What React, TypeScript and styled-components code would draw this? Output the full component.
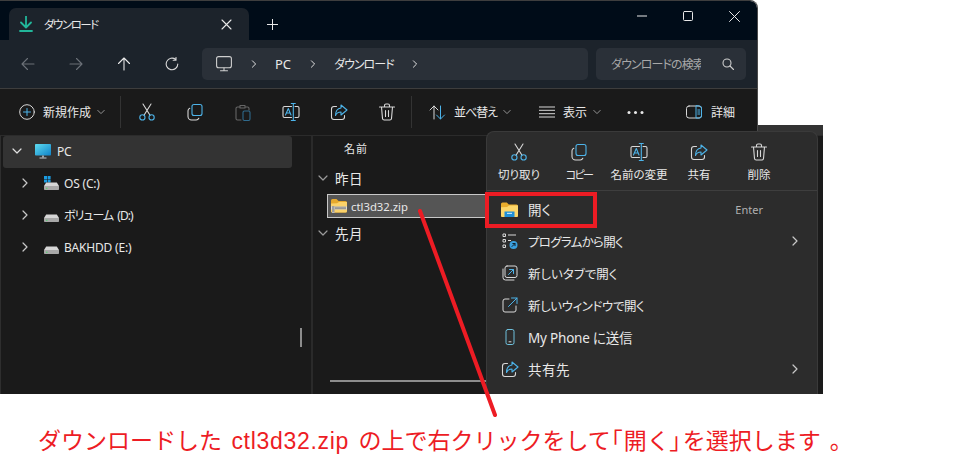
import React from "react";
import styled, { createGlobalStyle } from "styled-components";

const WHITE = "#e8e8e8";
const BLUE = "#4db4ea";
const UI = `"Noto Sans", "Noto Sans CJK JP", sans-serif`;

const Global = createGlobalStyle`
  html, body { margin: 0; padding: 0; background: #fff; }
  body { font-family: ${UI}; font-feature-settings: "palt"; }
  * { box-sizing: border-box; }
`;

const Page = styled.div`
  width: 957px;
  height: 467px;
  overflow: hidden;
  background: #fff;
`;
const Shot = styled.div`
  position: relative;
  width: 823px;
  height: 394px;
`;
const TopWindow = styled.div`
  width: 758px;
  display: flex;
  flex-direction: column;
  border-top-right-radius: 8px;
  overflow: hidden;
  border-right: 1px solid #4a4a4a;
  border-top: 1px solid #3e3e3e;
`;
const TitleBar = styled.div`
  height: 39px;
  background: #000c18;
  display: flex;
  align-items: flex-end;
  padding-left: 9px;
`;
const Tab = styled.div`
  width: 240px;
  height: 32px;
  background: #1c232b;
  border-radius: 7px 7px 0 0;
  display: flex;
  align-items: center;
  padding: 0 17px 0 9px;
  gap: 10px;
`;
const TabLabel = styled.span`
  flex: 1;
  font-size: 11.5px;
  letter-spacing: -1.5px;
  color: ${WHITE};
  white-space: nowrap;
`;
const NewTab = styled.div`
  width: 46px;
  height: 32px;
  display: flex;
  align-items: center;
  justify-content: center;
`;
const WinControls = styled.div`
  margin-left: auto;
  align-self: stretch;
  display: flex;
`;
const WinBtn = styled.div`
  width: 46px;
  display: flex;
  align-items: center;
  justify-content: center;
  padding-bottom: 9px;
`;
const NavBar = styled.div`
  height: 49px;
  background: #1c232b;
  border-bottom: 1px solid #3d3d3d;
  display: flex;
  align-items: center;
  padding: 0 0 1px 4px;
`;
const NavBtn = styled.div`
  width: 48px;
  display: flex;
  align-items: center;
  justify-content: center;
`;
const AddressBox = styled.div`
  margin-left: 6px;
  width: 386px;
  height: 32px;
  background: #2a3038;
  border-radius: 5px;
  display: flex;
  align-items: center;
  padding-left: 14px;
  gap: 17.5px;
`;
const Crumb = styled.span<{ $ls?: number; $size?: number }>`
  font-size: ${(p) => p.$size ?? 13}px;
  letter-spacing: ${(p) => p.$ls ?? 0}px;
  color: ${WHITE};
  white-space: nowrap;
`;
const SearchBox = styled.div`
  margin-left: 8px;
  width: 150px;
  height: 32px;
  background: #2a3038;
  border-radius: 5px;
  display: flex;
  align-items: center;
  padding: 0 12px 0 15px;
`;
const SearchText = styled.span`
  width: 90px;
  overflow: hidden;
  white-space: nowrap;
  font-size: 12px;
  letter-spacing: -0.9px;
  color: #a8a8a8;
  margin-right: auto;
`;
const Toolbar = styled.div`
  position: relative;
  height: 46px;
  background: #1a1a1a;
  display: flex;
  align-items: center;
`;
const ToolGroup = styled.div<{ $w: number; $pad: number; $gap?: number }>`
  width: ${(p) => p.$w}px;
  padding-left: ${(p) => p.$pad}px;
  display: flex;
  align-items: center;
  gap: ${(p) => p.$gap ?? 8}px;
  flex: none;
`;
const ToolLabel = styled.span<{ $ls?: number }>`
  font-size: 12px;
  letter-spacing: ${(p) => p.$ls ?? 0}px;
  color: ${WHITE};
  white-space: nowrap;
`;
const Caret = styled.span`
  margin-left: -2px;
  display: flex;
`;
const ToolDivider = styled.div`
  width: 1px;
  height: 32px;
  background: #333;
  flex: none;
  margin: 0 2px 0 0;
`;
const ToolIcon = styled.div`
  width: 48px;
  flex: none;
  display: flex;
  justify-content: center;
`;
const BackStrip = styled.div`
  position: absolute;
  left: 758px;
  top: 125px;
  width: 65px;
  height: 10px;
  background: #333;
`;
const Body = styled.div`
  width: 823px;
  height: 259px;
  background: #1a1a1a;
  border-left: 1px solid #2e2e2e;
  display: flex;
  border-top: 1px solid #2b2b2b;
`;
const NavPane = styled.div`
  width: 310px;
  flex: none;
  padding: 0 0 0 2px;
  display: flex;
  flex-direction: column;
`;
const TreeRow = styled.div<{ $active?: boolean; $level: number }>`
  width: 289px;
  height: 32px;
  border-radius: 3px;
  background: ${(p) => (p.$active ? "#333333" : "transparent")};
  display: flex;
  align-items: center;
  padding: 0 0 2px ${(p) => (p.$level ? 17 : 9)}px;
  gap: ${(p) => (p.$level ? 14 : 13)}px;
`;
const TreeLabel = styled.span<{ $level: number; $ls?: number; $ws?: number }>`
  font-size: 12px;
  letter-spacing: ${(p) => p.$ls ?? -0.2}px;
  word-spacing: ${(p) => p.$ws ?? 0}px;
  color: ${WHITE};
  white-space: nowrap;
  margin-left: ${(p) => (p.$level ? -9 : -7)}px;
`;
const VScroll = styled.div`
  position: absolute;
  left: 300px;
  top: 328px;
  width: 2px;
  height: 19px;
  background: #8c8c8c;
`;
const HScroll = styled.div`
  position: absolute;
  left: 330px;
  top: 380px;
  width: 156px;
  height: 2px;
  background: #8c8c8c;
`;
const FilePane = styled.div`
  flex: 1;
  border-left: 2px solid #2a2a2a;
  display: flex;
  flex-direction: column;
`;
const ColumnHead = styled.div`
  height: 26px;
  padding: 0 0 3px 31px;
  display: flex;
  align-items: center;
  font-size: 11px;
  letter-spacing: 1px;
  color: ${WHITE};
`;
const GroupRow = styled.div`
  height: 32px;
  padding-left: 5px;
  display: flex;
  align-items: center;
  gap: 7px;
  font-size: 13.5px;
  letter-spacing: 0.5px;
  color: ${WHITE};
`;
const FileRow = styled.div`
  margin: 0 0 -1px 14px;
  height: 24px;
  width: 180px;
  background: #555;
  border: 1px solid #c8c8c8;
  display: flex;
  align-items: center;
  padding-left: 3px;
  gap: 4px;
  font-size: 11.3px;
  color: ${WHITE};
`;
const Menu = styled.div`
  position: absolute;
  left: 486px;
  top: 131px;
  width: 332px;
  height: 263px;
  background: #2c2c2c;
  border: 1px solid #3a3a3a;
  border-bottom: 0;
  border-radius: 8px 8px 0 0;
`;
const QuickBar = styled.div`
  height: 59px;
  border-bottom: 1px solid #3e3e3e;
  padding: 10px 0 0 2px;
  display: grid;
  grid-template-columns: repeat(5, 60px);
`;
const QuickCell = styled.div`
  display: flex;
  flex-direction: column;
  align-items: center;
  gap: 4px;
`;
const QuickLabel = styled.span<{ $ls?: number; $size?: number }>`
  font-size: ${(p) => p.$size ?? 11.5}px;
  letter-spacing: ${(p) => p.$ls ?? 0}px;
  color: ${WHITE};
  white-space: nowrap;
`;
const MenuList = styled.div`
  padding-top: 2px;
  display: flex;
  flex-direction: column;
`;
const MenuRow = styled.div`
  height: 32px;
  display: flex;
  align-items: center;
  padding: 0 17px 0 12px;
`;
const MenuIcon = styled.div`
  width: 21px;
  margin-right: 8px;
  display: flex;
  justify-content: center;
`;
const MenuLabel = styled.span<{ $ls?: number; $size?: number }>`
  font-size: ${(p) => p.$size ?? 12.5}px;
  letter-spacing: ${(p) => p.$ls ?? 0}px;
  color: ${WHITE};
  white-space: nowrap;
  flex: 1;
`;
const MenuHint = styled.span`
  font-size: 11px;
  color: #b0b0b0;
  margin-right: 37px;
`;
const Annotation = styled.div`
  position: absolute;
  left: 485px;
  top: 192px;
  width: 112px;
  height: 36px;
  border: 4px solid #ed1c24;
`;
const Pointer = styled.svg`
  position: absolute;
  left: 0;
  top: 0;
  width: 957px;
  height: 467px;
  pointer-events: none;
`;
const Caption = styled.div`
  height: 73px;
  padding: 32px 0 0 38px;
  font-family: "Liberation Sans", "Noto Sans CJK JP", sans-serif;
  font-feature-settings: normal;
  font-size: 23px;
  line-height: 30px;
  color: #ed1c24;
  white-space: nowrap;
`;
const CaptionLatin = styled.span`
  letter-spacing: 0.7px;
  margin: 0 3px;
`;
const CaptionBracket = styled.span`
  font-feature-settings: "palt";
  letter-spacing: 1.5px;
`;
const CaptionStop = styled.span`
  margin-left: 9px;
`;

const Svg = styled.svg.attrs({ fill: "none", strokeLinecap: "round", strokeLinejoin: "round" })<{ $s?: number }>`
  width: ${(p) => p.$s ?? 20}px;
  height: ${(p) => p.$s ?? 20}px;
  display: block;
  flex: none;
`;

const Chevron = ({ dir, color = "#c8c8c8", s = 10 }: { dir: "r" | "d"; color?: string; s?: number }) => (
  <Svg $s={s} viewBox="0 0 10 10" stroke={color} strokeWidth={1.2}>
    <path d={dir === "r" ? "M3 1l4 4-4 4" : "M1 3l4 4 4-4"} />
  </Svg>
);
const Scissors = () => (
  <Svg viewBox="0 0 20 20" strokeWidth={1.1}>
    <path d="M7 13.2L14 2M13 13.2L6 2" stroke="#d8d8d8" />
    <circle cx="5.4" cy="15.4" r="2.6" stroke={BLUE} />
    <circle cx="14.6" cy="15.4" r="2.6" stroke={BLUE} />
  </Svg>
);
const Copy = () => (
  <Svg viewBox="0 0 20 20" strokeWidth={1.1}>
    <rect x="7" y="2.5" width="10" height="11" rx="2" stroke={BLUE} />
    <path d="M4.8 6.2C3.6 6.7 3 7.6 3 8.8v5.7C3 16.4 4.6 18 6.5 18h4.7c1.2 0 2.1-.6 2.6-1.8" stroke="#d8d8d8" />
  </Svg>
);
const Paste = () => (
  <Svg viewBox="0 0 20 20" strokeWidth={1.1}>
    <path d="M7 5H4.5C3.7 5 3 5.7 3 6.500v10C3 17.300 3.700 18 4.500 18H8M13 5h1.500c.8 0 1.500.7 1.500 1.500V8M7 3.500h5V6H7z" stroke="#666" />
    <rect x="10" y="9" width="7" height="9.500" rx="1.400" stroke="#2f6a8c" />
  </Svg>
);
const Rename = () => (
  <Svg viewBox="0 0 20 20" strokeWidth={1.1}>
    <path d="M10.500 4.500H3.500C2.700 4.500 2 5.200 2 6v8c0 .8.7 1.500 1.500 1.500h7M14 4.500h2.500c.8 0 1.500.7 1.500 1.500v8c0 .8-.7 1.500-1.500 1.500H14" stroke="#d8d8d8" />
    <path d="M10.300 1.500h4M10.300 18.500h4M12.300 1.500v17" stroke={BLUE} />
    <path d="M4.500 13L7.300 6.500 10 13M5.400 11h3.800" stroke={BLUE} />
  </Svg>
);
const Share = () => (
  <Svg viewBox="0 0 20 20" strokeWidth={1.1}>
    <path d="M7.500 4.500H5C3.600 4.500 2.500 5.600 2.500 7v8C2.500 16.400 3.600 17.500 5 17.500h8c1.400 0 2.500-1.100 2.500-2.500v-1.500" stroke="#d8d8d8" />
    <path d="M12 3l6 5-6 5v-3C9.500 10 7.500 11 6.500 13.500 6.500 9.500 8.500 6.500 12 6z" stroke={BLUE} />
  </Svg>
);
const Trash = () => (
  <Svg viewBox="0 0 20 20" strokeWidth={1.1} stroke="#d8d8d8">
    <path d="M2.500 5h15M7.500 5V3.500C7.500 2.700 8.200 2 9 2h2c.8 0 1.500.7 1.500 1.500V5M4.500 5l1 11.500c.1 1 .9 1.500 1.700 1.500h5.600c.8 0 1.600-.5 1.700-1.500l1-11.500M8.500 8.500v6M11.500 8.500v6" />
  </Svg>
);
const FolderBlue = () => (
  <svg width="17" height="15" viewBox="0 0 17 15">
    <path d="M0 2a1.500 1.500 0 0 1 1.500-1.500h4.300l2 2H15.500A1.500 1.500 0 0 1 17 4v9.500A1.500 1.500 0 0 1 15.500 15h-14A1.500 1.500 0 0 1 0 13.500z" fill="#e9ac2c" />
    <path d="M0 5.200l6-.2 2-1.500h9v10A1.500 1.500 0 0 1 15.500 15h-14A1.500 1.500 0 0 1 0 13.500z" fill="#fcd66a" />
    <path d="M3.500 9.500h10V15h-10z" fill="#1f8fd8" />
    <path d="M6 10.800h5v1.200H6z" fill="#bfe3f7" />
  </svg>
);
const ZipFolder = () => (
  <svg width="16" height="14" viewBox="0 0 16 14">
    <path d="M0 1.500A1.500 1.500 0 0 1 1.500 0h4l2 2h7A1.500 1.500 0 0 1 16 3.500V12a1.500 1.500 0 0 1-1.500 1.500h-13A1.500 1.500 0 0 1 0 12z" fill="#e6a92d" />
    <path d="M0 4.500l6-.2 2-1.300h8v9A1.500 1.500 0 0 1 14.500 13.500h-13A1.500 1.500 0 0 1 0 12z" fill="#fbd26a" />
    <path d="M0 7.500h16v3H0z" fill="#d8d8d8" />
    <path d="M1 7v7h2.500V7z" fill="#bdbdbd" />
    <path d="M1 8h2.500M1 10h2.500M1 12h2.500M4 8.200h11M4 9.700h11" stroke="#666" strokeWidth="0.7" />
  </svg>
);
const Monitor = () => (
  <svg width="16" height="15" viewBox="0 0 16 15">
    <defs>
      <linearGradient id="mon" x1="0" y1="0" x2="1" y2="1">
        <stop offset="0" stopColor="#5fdcf0" />
        <stop offset="1" stopColor="#0f82c8" />
      </linearGradient>
    </defs>
    <rect x="0" y="0" width="16" height="11.500" rx="0.800" fill="url(#mon)" />
    <path d="M7 11.500h2V13.500H7z" fill="#9aa3aa" />
    <path d="M4.500 13.500h7V14.500h-7z" fill="#c4cacf" />
  </svg>
);
const Drive = ({ win }: { win?: boolean }) => (
  <svg width="15" height="15" viewBox="0 0 15 15">
    {win && <path d="M0 0h3v3H0zM3.600 0h3v3h-3zM0 3.600h3v3H0zM3.600 3.600h3v3h-3z" fill="#1b9be0" />}
    <path d="M2.200 6.500h10.600L15 10H0z" fill="#d6d6d6" />
    <path d="M0 10h15v3.200a.8.8 0 0 1-.8.8H.8a.8.8 0 0 1-.8-.8z" fill="#a8a8a8" />
    <path d="M2 11.700h1.500v1H2z" fill="#4bd46a" />
  </svg>
);

export default function App() {
  return (
    <Page>
      <Global />
      <Shot>
        <TopWindow>
          <TitleBar>
            <Tab>
              <Svg $s={16} viewBox="0 0 16 16" stroke="#22b69a" strokeWidth={1.8} strokeLinecap="butt">
                <path d="M8 0v11M3 6.500l5 5 5-5M2 15h12" />
              </Svg>
              <TabLabel>ダウンロード</TabLabel>
              <Svg $s={11} viewBox="0 0 11 11" stroke="#e8e8e8" strokeWidth={1.1}>
                <path d="M1 1l9 9M10 1l-9 9" />
              </Svg>
            </Tab>
            <NewTab>
              <Svg $s={11} viewBox="0 0 11 11" stroke="#e8e8e8" strokeWidth={1}>
                <path d="M5.500 0v11M0 5.500h11" />
              </Svg>
            </NewTab>
            <WinControls>
              <WinBtn>
                <Svg $s={10} viewBox="0 0 10 10" stroke="#e8e8e8" strokeWidth={1} strokeLinecap="butt">
                  <path d="M0 5h10" />
                </Svg>
              </WinBtn>
              <WinBtn>
                <Svg $s={10} viewBox="0 0 10 10" stroke="#e8e8e8" strokeWidth={1}>
                  <rect x="0.500" y="0.500" width="9" height="9" rx="1" />
                </Svg>
              </WinBtn>
              <WinBtn>
                <Svg $s={11} viewBox="0 0 11 11" stroke="#e8e8e8" strokeWidth={1}>
                  <path d="M0.500 0.500l10 10M10.500 0.500l-10 10" />
                </Svg>
              </WinBtn>
            </WinControls>
          </TitleBar>
          <NavBar>
            <NavBtn>
              <Svg $s={14} viewBox="0 0 14 14" stroke="#6b7077" strokeWidth={1.1}>
                <path d="M13 7H1M6.500 1.500L1 7l5.500 5.500" />
              </Svg>
            </NavBtn>
            <NavBtn>
              <Svg $s={14} viewBox="0 0 14 14" stroke="#6b7077" strokeWidth={1.1}>
                <path d="M1 7h12M7.500 1.500L13 7l-5.500 5.500" />
              </Svg>
            </NavBtn>
            <NavBtn>
              <Svg $s={14} viewBox="0 0 14 14" stroke="#e8e8e8" strokeWidth={1.1}>
                <path d="M7 13V1M1.500 6.500L7 1l5.500 5.500" />
              </Svg>
            </NavBtn>
            <NavBtn>
              <Svg $s={14} viewBox="0 0 14 14" stroke="#d8d8d8" strokeWidth={1.1}>
                <path d="M12.800 7A5.800 5.800 0 1 1 10.700 2.500M11 .5v2.800H8.200" />
              </Svg>
            </NavBtn>
            <AddressBox>
              <Svg $s={16} viewBox="0 0 16 16" stroke="#cfcfcf" strokeWidth={1.1}>
                <rect x="0.600" y="0.600" width="14.800" height="11.200" rx="2" />
                <path d="M8 12v2.500M4.500 14.800h7" />
              </Svg>
              <Chevron dir="r" color="#e8e8e8" s={8} />
              <Crumb>PC</Crumb>
              <Chevron dir="r" color="#e8e8e8" s={8} />
              <Crumb $size={12} $ls={-1}>ダウンロード</Crumb>
              <Chevron dir="r" color="#e8e8e8" s={8} />
            </AddressBox>
            <SearchBox>
              <SearchText>ダウンロードの検索</SearchText>
              <Svg $s={12} viewBox="0 0 12 12" stroke="#cfcfcf" strokeWidth={1.1}>
                <circle cx="5" cy="5" r="4" />
                <path d="M8 8l3.500 3.500" />
              </Svg>
            </SearchBox>
          </NavBar>
          <Toolbar>
            <ToolGroup $w={120} $pad={19}>
              <Svg $s={16} viewBox="0 0 16 16" strokeWidth={1}>
                <circle cx="8" cy="8" r="7.300" stroke="#d8d8d8" />
                <path d="M8 4.500v7M4.500 8h7" stroke={BLUE} />
              </Svg>
              <ToolLabel>新規作成</ToolLabel>
              <Caret><Chevron dir="d" color="#9a9a9a" s={8} /></Caret>
            </ToolGroup>
            <ToolDivider />
            <ToolIcon><Scissors /></ToolIcon>
            <ToolIcon><Copy /></ToolIcon>
            <ToolIcon><Paste /></ToolIcon>
            <ToolIcon><Rename /></ToolIcon>
            <ToolIcon><Share /></ToolIcon>
            <ToolIcon><Trash /></ToolIcon>
            <ToolDivider />
            <ToolGroup $w={109} $pad={15}>
              <Svg $s={17} viewBox="0 0 17 17" strokeWidth={1}>
                <path d="M5 15V2M1 6l4-4 4 4" stroke="#d8d8d8" />
                <path d="M11.500 2v13M7.500 11l4 4 4-4" stroke={BLUE} />
              </Svg>
              <ToolLabel $ls={-1}>並べ替え</ToolLabel>
              <Caret><Chevron dir="d" color="#9a9a9a" s={8} /></Caret>
            </ToolGroup>
            <ToolGroup $w={88} $pad={16}>
              <Svg $s={16} viewBox="0 0 16 16" stroke="#d8d8d8" strokeWidth={1} strokeLinecap="butt">
                <path d="M0 3h16M0 6.300h16M0 9.700h16M0 13h16" />
              </Svg>
              <ToolLabel>表示</ToolLabel>
              <Caret><Chevron dir="d" color="#9a9a9a" s={8} /></Caret>
            </ToolGroup>
            <ToolIcon>
              <Svg $s={17} viewBox="0 0 17 6" fill="#e8e8e8">
                <circle cx="2" cy="3" r="1.500" fill="#e8e8e8" />
                <circle cx="8.500" cy="3" r="1.500" fill="#e8e8e8" />
                <circle cx="15" cy="3" r="1.500" fill="#e8e8e8" />
              </Svg>
            </ToolIcon>
            <ToolGroup $w={97} $pad={27} $gap={9}>
              <Svg $s={16} viewBox="0 0 16 16" strokeWidth={1}>
                <rect x="0.500" y="2" width="15" height="12" rx="2.500" stroke="#d8d8d8" />
                <path d="M10 2v12h3.500a2 2 0 0 0 2-2V4a2 2 0 0 0-2-2zM11.800 6h2M11.800 8h2M11.800 10h2" stroke={BLUE} />
              </Svg>
              <ToolLabel>詳細</ToolLabel>
            </ToolGroup>
          </Toolbar>
        </TopWindow>
        <BackStrip />
        <Body>
          <NavPane>
            <TreeRow $active $level={0}>
              <Chevron dir="d" color="#e0e0e0" />
              <Monitor />
              <TreeLabel $level={0}>PC</TreeLabel>
            </TreeRow>
            <TreeRow $level={1}>
              <Chevron dir="r" />
              <Drive win />
              <TreeLabel $level={1}>OS (C:)</TreeLabel>
            </TreeRow>
            <TreeRow $level={1}>
              <Chevron dir="r" />
              <Drive />
              <TreeLabel $level={1} $ls={-1} $ws={2}>ボリューム (D:)</TreeLabel>
            </TreeRow>
            <TreeRow $level={1}>
              <Chevron dir="r" />
              <Drive />
              <TreeLabel $level={1}>BAKHDD (E:)</TreeLabel>
            </TreeRow>
          </NavPane>
          <FilePane>
            <ColumnHead>名前</ColumnHead>
            <GroupRow>
              <Chevron dir="d" color="#9a9a9a" />
              昨日
            </GroupRow>
            <FileRow>
              <ZipFolder />
              ctl3d32.zip
            </FileRow>
            <GroupRow>
              <Chevron dir="d" color="#9a9a9a" />
              先月
            </GroupRow>
          </FilePane>
        </Body>
        <VScroll />
        <HScroll />
        <Menu>
          <QuickBar>
            <QuickCell><Scissors /><QuickLabel>切り取り</QuickLabel></QuickCell>
            <QuickCell><Copy /><QuickLabel $size={11} $ls={-1.8}>コピー</QuickLabel></QuickCell>
            <QuickCell><Rename /><QuickLabel>名前の変更</QuickLabel></QuickCell>
            <QuickCell><Share /><QuickLabel>共有</QuickLabel></QuickCell>
            <QuickCell><Trash /><QuickLabel>削除</QuickLabel></QuickCell>
          </QuickBar>
          <MenuList>
            <MenuRow>
              <MenuIcon><FolderBlue /></MenuIcon>
              <MenuLabel $size={13.5}>開く</MenuLabel>
              <MenuHint>Enter</MenuHint>
            </MenuRow>
            <MenuRow>
              <MenuIcon>
                <Svg $s={16} viewBox="0 0 16 16" strokeWidth={1}>
                  <path d="M1 1h2.500v2.500H1zM1 6.500h2.500V9H1zM1 12h2.500v2.500H1zM6 2h8M6 7.500h3" stroke="#d8d8d8" strokeLinecap="butt" />
                  <circle cx="11.500" cy="12" r="4" fill="#3aa0e0" stroke="none" />
                  <path d="M10 13.500l3-3M10.800 10.500H13v2.200" stroke="#10202c" />
                </Svg>
              </MenuIcon>
              <MenuLabel $ls={-0.7}>プログラムから開く</MenuLabel>
              <Chevron dir="r" />
            </MenuRow>
            <MenuRow>
              <MenuIcon>
                <Svg $s={16} viewBox="0 0 16 16" strokeWidth={1}>
                  <rect x="3" y="1" width="12" height="11.500" rx="2" stroke="#d8d8d8" />
                  <path d="M1 4v8.500A2.500 2.500 0 0 0 3.500 15H12" stroke="#d8d8d8" />
                  <path d="M6.500 9.500l5-5M7.500 4.500h4v4" stroke={BLUE} />
                </Svg>
              </MenuIcon>
              <MenuLabel>新しいタブで開く</MenuLabel>
            </MenuRow>
            <MenuRow>
              <MenuIcon>
                <Svg $s={16} viewBox="0 0 16 16" strokeWidth={1}>
                  <path d="M7 2H3a2 2 0 0 0-2 2v9a2 2 0 0 0 2 2h9a2 2 0 0 0 2-2V9" stroke="#d8d8d8" />
                  <path d="M6.500 9.500L15 1M9.500 1H15v5.500" stroke={BLUE} />
                </Svg>
              </MenuIcon>
              <MenuLabel $ls={-0.4}>新しいウィンドウで開く</MenuLabel>
            </MenuRow>
            <MenuRow>
              <MenuIcon>
                <Svg $s={16} viewBox="0 0 16 16" strokeWidth={1} stroke="#6fc0dc">
                  <rect x="4" y="0.500" width="8" height="15" rx="1.800" />
                  <path d="M7 12.800h2" stroke="#d8d8d8" />
                </Svg>
              </MenuIcon>
              <MenuLabel $size={13.5} $ls={-0.2}>My Phone に送信</MenuLabel>
            </MenuRow>
            <MenuRow>
              <MenuIcon><Share /></MenuIcon>
              <MenuLabel $size={13.5} $ls={0.5}>共有先</MenuLabel>
              <Chevron dir="r" />
            </MenuRow>
          </MenuList>
        </Menu>
        <Annotation />
      </Shot>
      <Caption>
        ダウンロードした <CaptionLatin>ctl3d32.zip</CaptionLatin> の上で右クリックをして
        <CaptionBracket>「</CaptionBracket>開く<CaptionBracket>」</CaptionBracket>を選択します<CaptionStop>。</CaptionStop>
      </Caption>
      <Pointer viewBox="0 0 957 467">
        <path d="M420 211L495 415" stroke="#ed1c24" strokeWidth="4" strokeLinecap="round" />
      </Pointer>
    </Page>
  );
}
